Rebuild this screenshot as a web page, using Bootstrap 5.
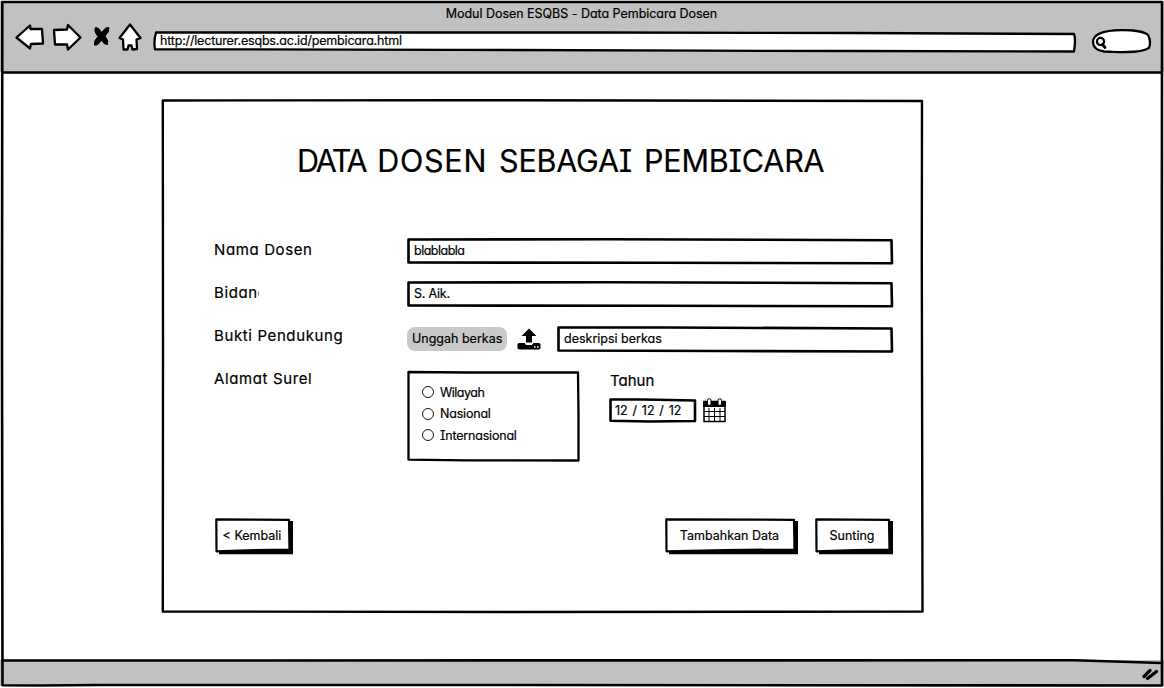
<!DOCTYPE html>
<html lang="id">
<head>
<meta charset="utf-8">
<meta name="viewport" content="width=device-width, initial-scale=1">
<title>Modul Dosen ESQBS - Data Pembicara Dosen</title>
<link href="https://cdn.jsdelivr.net/npm/bootstrap@5.3.0/dist/css/bootstrap.min.css" rel="stylesheet">
<style>
body{font-family:Inter,"Open Sans",sans-serif;font-size:12.5px;line-height:20px;color:#000;background:#fff;font-feature-settings:"cv11","cv08";-webkit-text-stroke:.2px #000;overflow:hidden}
.browser{width:1164px;height:688px;isolation:isolate}
.chrome-bar{height:71px;margin-top:1px;background:#c1c1c1}
.page-title{height:26px;line-height:25px;letter-spacing:-.03px;padding-right:1px}
.tools{height:45px;padding:0 12px 0 14px}
.nav-icons{margin-top:-6px}
.address{width:924px;height:22px;line-height:20px;margin:4px 15px 0 10px;padding-left:7px;letter-spacing:-.18px}
.search{width:61px;height:26px;margin-top:1px}
.status{height:26px;margin-bottom:2px;background:#c1c1c1;padding:7px 5px 0 0}
.sketch{position:absolute;inset:0;width:100%;height:100%;z-index:-1;overflow:visible;fill:#fff;stroke:#000;stroke-width:2.6;stroke-linejoin:round;stroke-linecap:round}
.holder{position:relative;isolation:isolate}
.outline{z-index:1;fill:none}
svg{display:block;flex:none}
.panel{width:762px;height:514px;margin:27px 0 0 162px;padding:0 30px 0 52px}
.panel h1{font-size:30.5px;line-height:40px;font-weight:400;padding:42px 0 0 83px;margin:0 0 47px;white-space:nowrap;word-spacing:3.4px}
.w-tight{letter-spacing:-2.3px}
.w-wide{letter-spacing:.7px}
.w-snug{letter-spacing:-.2px}
.form-grid{display:grid;grid-template-columns:193px 1fr;grid-template-rows:43px 43px 43px 108px}
.label-text{font-size:15px;line-height:43px;white-space:nowrap;letter-spacing:.62px}
.clipped{width:45px;overflow:hidden}
.field{height:27px;line-height:25px;padding-left:7px;white-space:nowrap}
.form-grid>.field{margin-top:10px}
.tight-text{letter-spacing:-.5px}
.upload-row{padding-top:12px}
.upload{width:100px;height:24px;margin-top:1px;border-radius:8px;background:#c9c9c9;color:#000;line-height:21px;padding:0 0 2px 5px;border:0;white-space:nowrap}
.upload-icon{margin:1px 15px 0 9px}
.choice-row{padding-top:13px}
.choices{width:173px;height:92px;padding:12px 0 0 15px;flex:none}
.choice{height:21.5px;gap:6px}
.choice i{width:12px;height:12px;border:1.4px solid #111;border-radius:50%;background:#fff;margin-top:-1px}
.year{margin-left:29px}
.year-label{font-size:15px;line-height:21px;height:28px;padding-left:1px}
.date{width:88px;height:25px;line-height:25px;padding-left:6px;word-spacing:1.3px}
.actions{padding:53px 1px 0 1px;gap:17px}
.action{height:37px;line-height:34px;border:0;background:none;padding:0 4px 2px 0;color:#000;font-size:12.5px;text-align:center;white-space:nowrap}
.back,.edit{width:78px}
.add{width:133px}
</style>
</head>
<body>
<div class="browser holder d-flex flex-column">
  <header class="chrome-bar">
    <div class="page-title text-center">Modul Dosen ESQBS - Data Pembicara Dosen</div>
    <div class="tools d-flex align-items-start">
      <svg class="nav-icons" width="129" height="32" viewBox="14 21 129 32" fill="#fff" stroke="#000" stroke-width="2.3" stroke-linejoin="round">
        <path d="M16.500 37.500L30 25.500L30.500 29L42 29L43 43.500L31 44L30 48.500Z"/>
        <path d="M54 30L67 29.500L68 25L80.500 37.500L68 49.500L67 44.500L55 44.500Z"/>
        <path d="M95.500 27.500Q100 28 101.500 33Q105 27 109 27.500Q109.500 32 105 36Q109 41 107.500 44.500Q104 45 101.500 40Q98 46 94.500 45Q93.500 41 98 36.500Q93.500 31 95.500 27.500Z" fill="#000" stroke-width="1"/>
        <path d="M130 24.500L140.500 38L136.500 39.500L137 49L132.500 49.500L131.500 45.500L128.500 45.500L127.500 49.500L123.500 49.500L123 39.500L119.500 38Z"/>
      </svg>
      <div class="address holder">
        <svg class="sketch" viewBox="0 0 924 22" preserveAspectRatio="none"><path d="M3 1.500L450 1.500L700 2L922 3Q924 8 922 20.500L700 20L550 19.700L300 18.800L2 18.300Q.5 10 3 1.500Z" stroke-width="2.3"/></svg>
        <span>http://lecturer.esqbs.ac.id/pembicara.html</span>
      </div>
      <svg class="search" viewBox="0 0 61 26" fill="#fff" stroke="#000" stroke-width="2.3"><path d="M2 14C2 5 14 2.500 30 2.200C43 2 54 4 57 7C59.500 11 59.500 17 58 20C52 23.500 46 24 36 24C28 24.500 20 23.500 13 23.500C6 22.500 2 19 2 14Z"/><circle cx="9.500" cy="13.500" r="3.600"/><path d="M11.500 16.500L14 19.500" stroke-width="2.800" stroke-linecap="round"/></svg>
    </div>
  </header>
  <main class="flex-grow-1">
    <section class="panel holder">
      <svg class="sketch" viewBox="0 0 762 514" preserveAspectRatio="none"><path d="M.8 1.500L300 1.200L760 2L759.800 160L760.500 512.500L350 513L.8 512.500L1 250Z" stroke-width="2.400"/></svg>
      <h1><span class="w-tight">DATA</span> <span class="w-wide">DOSEN</span> <span class="w-snug">SEBAGAI</span> <span class="w-snug">PEMBICARA</span></h1>
      <div class="form-grid">
        <div class="label-text">Nama Dosen</div>
        <div class="field holder tight-text"><svg class="sketch" viewBox="0 0 486 27" preserveAspectRatio="none"><path d="M1.500 1.500L200 1.300L483.500 2.200L484 25.200L250 24.800L1.500 24.500Z"/></svg>blablabla</div>
        <div class="label-text clipped">Bidang</div>
        <div class="field holder w-snug"><svg class="sketch" viewBox="0 0 486 27" preserveAspectRatio="none"><path d="M1.500 1.500L200 1.300L483.500 2.200L484 25.200L250 24.800L1.500 24.500Z"/></svg>S. Aik.</div>
        <div class="label-text">Bukti Pendukung</div>
        <div class="d-flex align-items-start upload-row">
          <button class="upload text-start">Unggah berkas</button>
          <svg class="upload-icon" width="26" height="25" viewBox="516 327 26 25"><path d="M529 328.500L536.500 336L532 336L532 342.500L526 342.500L526 336L521.500 336ZM519 343H524.500L526 345H532L533.500 343H539L540.500 344V348.500L539 349.500H519L517.500 348.500V344Z"/><path d="M534 347h1.500M537 347h1.500" stroke="#fff" stroke-width="1.500"/></svg>
          <div class="field holder flex-grow-1"><svg class="sketch" viewBox="0 0 336 27" preserveAspectRatio="none"><path d="M1.500 1.500L110 1.500L333.500 2.500L334 25.500L160 25L1.500 24.500Z"/></svg>deskripsi berkas</div>
        </div>
        <div class="label-text">Alamat Surel</div>
        <div class="d-flex align-items-start choice-row">
          <div class="choices holder">
            <svg class="sketch" viewBox="0 0 173 92" preserveAspectRatio="none"><path d="M1.500 2L60 2.500L171 2.500L171.500 45L171.500 90.500L60 90.300L1.500 89.700Z" stroke-width="2.300"/></svg>
            <div class="choice d-flex align-items-center tight-text"><i></i><span>Wilayah</span></div>
            <div class="choice d-flex align-items-center w-snug"><i></i><span>Nasional</span></div>
            <div class="choice d-flex align-items-center w-snug"><i></i><span>Internasional</span></div>
          </div>
          <div class="year">
            <div class="year-label">Tahun</div>
            <div class="d-flex">
              <div class="field date holder"><svg class="sketch" viewBox="0 0 88 25" preserveAspectRatio="none"><path d="M1.500 1.500L35 1.500L86 2.500L86 23L40 23.500L1.500 22.800Z"/></svg>12 / 12 / 12</div>
              <svg class="ms-1 ps-0" width="26" height="25" viewBox="-2 0 26 25"><path d="M1 3.500H22V23.500H1Z" fill="#fff" stroke="#000" stroke-width="1.500"/><path d="M.2 3.500H22.800V9H.2Z"/><path d="M6 10V23M11.500 10V23M17 10V23M1 13.500H22M1 18.500H22" stroke="#000" fill="none"/><g fill="#fff" stroke="#000"><rect x="4.500" y=".8" width="3.500" height="6.500" rx="1.500"/><rect x="15" y=".8" width="3.500" height="6.500" rx="1.500"/></g></svg>
            </div>
          </div>
        </div>
      </div>
      <div class="actions d-flex">
        <button class="action holder back"><svg class="sketch" viewBox="0 0 78 37" preserveAspectRatio="none"><path d="M4 3H78V36.200H4Z" fill="#000" stroke="none"/><path d="M1.300 1.300L74 1.800L74.500 31.500L40 32L1.500 33.300Z" stroke-width="2.200"/></svg>&lt; Kembali</button>
        <button class="action holder add ms-auto"><svg class="sketch" viewBox="0 0 133 37" preserveAspectRatio="none"><path d="M4 3H133V36.200H4Z" fill="#000" stroke="none"/><path d="M1.300 1.300L129 1.800L129.500 31.500L60 32L1.500 33.300Z" stroke-width="2.200"/></svg>Tambahkan Data</button>
        <button class="action holder edit"><svg class="sketch" viewBox="0 0 78 37" preserveAspectRatio="none"><path d="M4 3H78V36.200H4Z" fill="#000" stroke="none"/><path d="M1.300 1.300L74 1.800L74.500 31.500L40 32L1.500 33.300Z" stroke-width="2.200"/></svg>Sunting</button>
      </div>
    </section>
  </main>
  <footer class="status d-flex justify-content-end"><svg width="17" height="14" viewBox="0 0 17 14" stroke="#000" stroke-width="3.200" stroke-linecap="round"><path d="M2 9.500L8 3.500M5.500 11.500L14.500 4.500"/></svg></footer>
  <svg class="sketch outline" viewBox="0 0 1164 688" preserveAspectRatio="none"><path d="M2.300 2L600 2L1162 2L1161.800 350L1162 685.500L500 685L100 685L40 685.500L2.500 685.300L2 350Z"/><path d="M2.500 72.500H1161M2.500 660.500L1075 660.300L1161 663"/></svg>
</div>
<script src="https://cdn.jsdelivr.net/npm/bootstrap@5.3.0/dist/js/bootstrap.bundle.min.js"></script>
</body>
</html>
